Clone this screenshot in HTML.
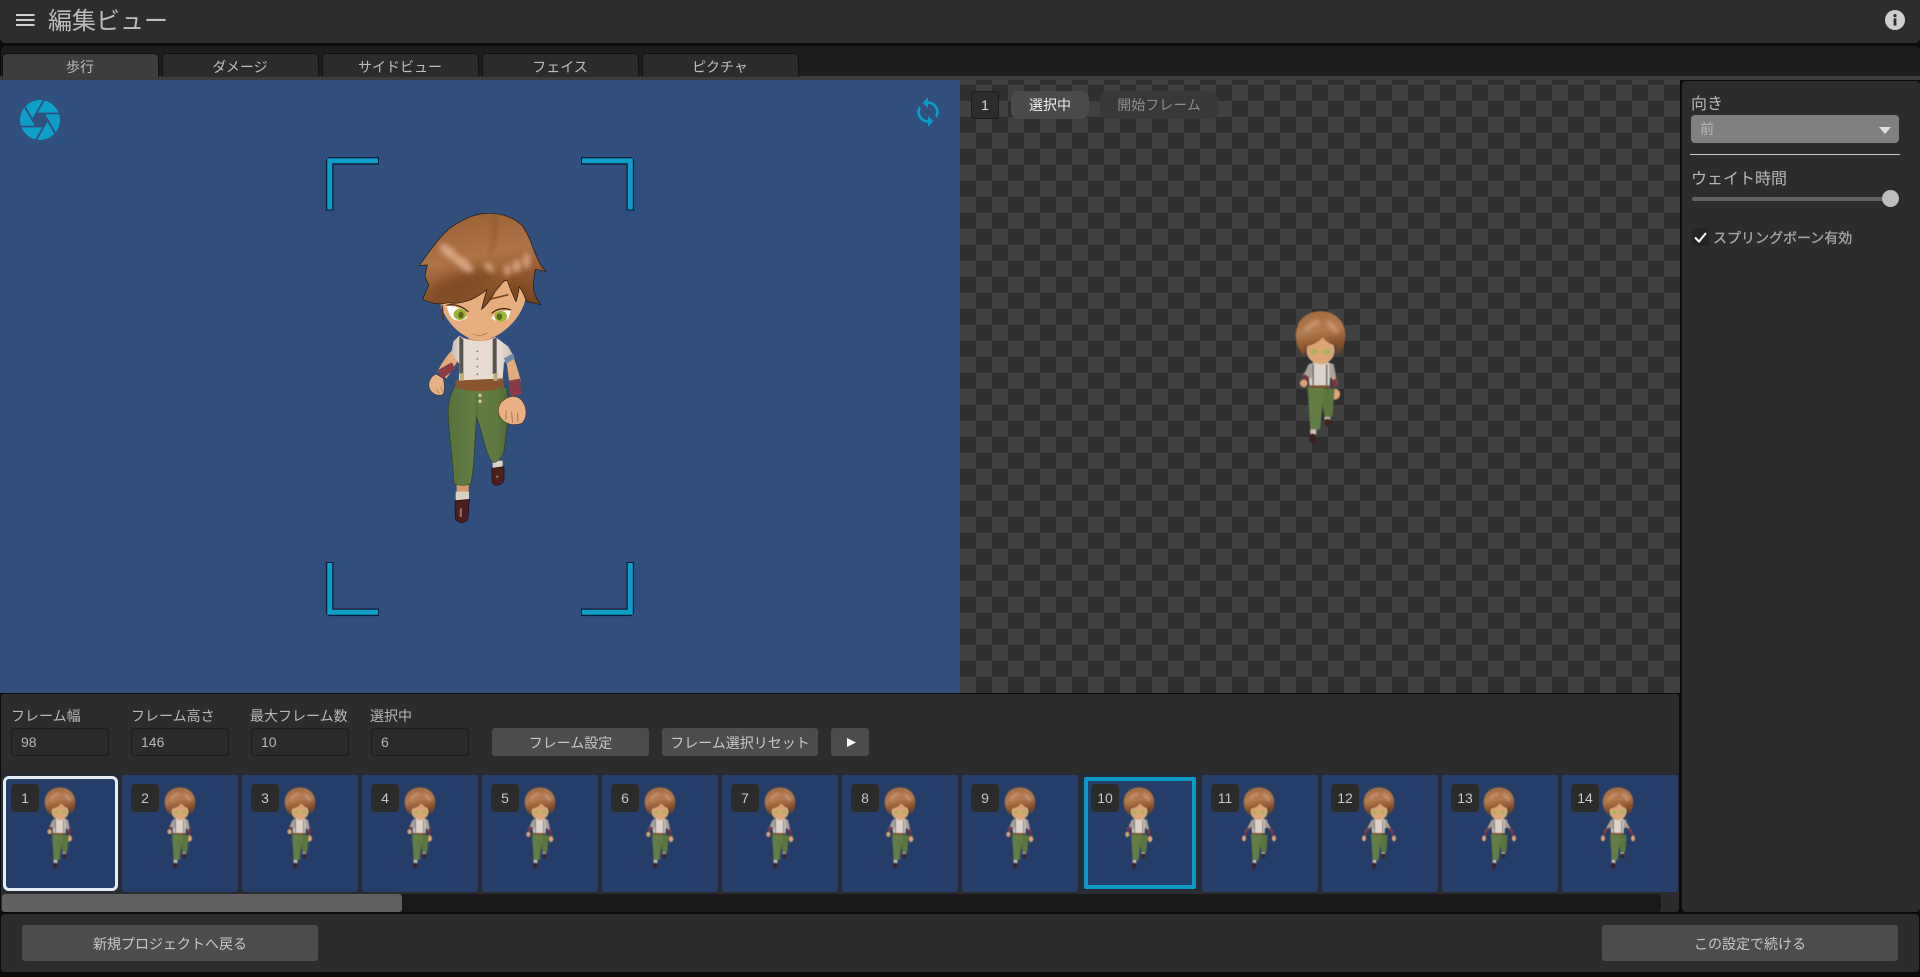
<!DOCTYPE html>
<html lang="ja"><head><meta charset="utf-8"><title>編集ビュー</title>
<style>
*{box-sizing:border-box}
html,body{margin:0;padding:0;width:1920px;height:977px;overflow:hidden;background:#0c0c0c}
body{position:relative;font-family:"Liberation Sans","Noto Sans CJK JP",sans-serif;color:#c4c4c4}
.a{position:absolute}
.tab{position:absolute;top:53px;width:157px;height:24px;background:#2b2b2b;border:1px solid #111;border-bottom:0;border-radius:5px 5px 0 0;text-align:center;font-size:14px;line-height:26px;color:#bdbdbd}
.lbl{position:absolute;top:706px;font-size:14px;line-height:20px;color:#b8b8b8;white-space:nowrap}
.inp{position:absolute;top:728px;width:98px;height:28px;background:#2a2a2a;border:1px solid #1c1c1c;border-radius:4px;font-size:14px;line-height:27px;padding-left:9px;color:#b8b8b8}
.btn{position:absolute;background:#4c4c4c;border-radius:3px;text-align:center;font-size:14px;color:#c8c8c8;white-space:nowrap}
.f{position:absolute;top:775px;width:116px;height:117px;background:#243e69;border-radius:3px}
.n{position:absolute;top:784px;width:28px;height:28px;background:#2b2b2b;border-radius:4px;text-align:center;font-size:14px;line-height:29px;color:#c8c8c8;z-index:3}
.t{position:absolute;top:770px;width:130px;height:130px;z-index:2;filter:blur(.45px)}
</style></head><body>
<svg width="0" height="0" style="position:absolute">
<defs>
<linearGradient id="hg" x1="0.3" y1="0" x2="0.55" y2="1"><stop offset="0" stop-color="#9a6136"/><stop offset=".45" stop-color="#ae7346"/><stop offset=".75" stop-color="#8e562e"/><stop offset="1" stop-color="#774622"/></linearGradient>
<linearGradient id="pg" x1="0" y1="0" x2="1" y2="0"><stop offset="0" stop-color="#567239"/><stop offset=".35" stop-color="#627d43"/><stop offset=".8" stop-color="#5f7a40"/><stop offset="1" stop-color="#4f6a35"/></linearGradient>
<linearGradient id="sg" x1="0" y1="0" x2="1" y2="0"><stop offset="0" stop-color="#c9bfb8"/><stop offset=".2" stop-color="#e6dad1"/><stop offset=".8" stop-color="#e6dad1"/><stop offset="1" stop-color="#c9bfb8"/></linearGradient>
<linearGradient id="tg" x1="0.3" y1="0" x2="0.5" y2="1"><stop offset="0" stop-color="#a56c42"/><stop offset=".45" stop-color="#b37a4e"/><stop offset=".8" stop-color="#84502a"/><stop offset="1" stop-color="#6d4020"/></linearGradient>
<filter id="b4" x="-30%" y="-30%" width="160%" height="160%"><feGaussianBlur stdDeviation="4"/></filter>
<filter id="b8" x="-40%" y="-40%" width="180%" height="180%"><feGaussianBlur stdDeviation="8"/></filter>
<filter id="b14" x="-30%" y="-30%" width="160%" height="160%"><feGaussianBlur stdDeviation="14"/></filter>
<clipPath id="hc"><path d="M118,226 C145,190 170,150 205,118 C240,92 280,72 320,70 C365,68 405,85 425,105 C445,130 455,165 470,200 C478,220 488,235 498,244 L466,238 C462,260 458,285 462,305 C468,325 475,335 482,344 L440,334 C435,320 428,305 418,290 C415,310 412,325 408,335 C398,315 390,295 382,272 C375,270 368,275 362,285 L345,305 C335,325 320,345 305,358 C308,340 315,320 320,300 C300,315 285,325 270,330 C250,338 225,342 205,338 L182,342 C160,342 145,335 128,328 C135,310 142,298 146,285 C142,275 137,268 135,258 C137,245 140,235 142,225 C135,225 125,226 118,226Z"/></clipPath>

<symbol id="body" viewBox="0 0 390 390">
<path d="M178,195 L206,195 L202,246 L188,250Z" fill="#5c773d"/>
<rect x="187" y="247" width="11" height="5" fill="#bdb3a5"/>
<ellipse cx="193" cy="258" rx="5" ry="7" fill="#42211f"/>
<path d="M156,192 L187,192 L179,270 L161,270Z" fill="#637e44"/>
<rect x="161" y="270" width="11" height="9" fill="#cfc5b6"/>
<ellipse cx="165" cy="287" rx="6" ry="9" fill="#3e1f1e"/>
<path d="M158,150 L172,146 L192,146 L204,150 L208,170 L197,175 L197,193 L160,193 L158,172 L150,168Z" fill="#ddd3ca"/>
<path d="M150,168 L158,150 L166,148 L164,178Z M208,170 L204,150 L196,148 L197,176Z" fill="#a9a29c"/>
<rect x="165" y="150" width="2.5" height="40" fill="#6a6660"/><rect x="190" y="150" width="2.5" height="40" fill="#6a6660"/>
<rect x="158" y="189" width="40" height="5" fill="#7d5434"/>
<ellipse cx="180" cy="124" rx="26" ry="26" fill="#dca575"/>
<ellipse cx="168" cy="127" rx="6.5" ry="5" fill="#a6b55a"/><ellipse cx="192" cy="127" rx="6.5" ry="5" fill="#a6b55a"/>
<path d="M135,105 C130,70 155,52 180,52 C206,52 230,72 225,105 C224,118 218,127 212,134 L207,115 C198,113 190,108 184,100 C176,110 164,114 154,117 L150,135 C141,125 136,115 135,105Z" fill="url(#tg)"/>
<path d="M152,88 C160,78 170,72 178,72 M192,72 C200,76 206,84 210,92" stroke="#cf9f7c" stroke-width="7" fill="none" filter="url(#b4)"/>
</symbol>
<symbol id="a1" viewBox="0 0 390 390">
<path d="M162,155 L151,172" stroke="#c9a084" stroke-width="8" fill="none"/><path d="M156,167 L150,178" stroke="#7d3440" stroke-width="9" fill="none"/>
<circle cx="149" cy="185" r="7" fill="#dca374"/>
<path d="M200,158 L208,188" stroke="#c9a084" stroke-width="8" fill="none"/><path d="M205,178 L208,192" stroke="#7d3440" stroke-width="8" fill="none"/>
<circle cx="206" cy="205" r="10" fill="#e0a676"/>
</symbol>
<symbol id="a2" viewBox="0 0 390 390">
<path d="M162,155 L148,178" stroke="#c9a084" stroke-width="7" fill="none"/><path d="M154,170 L147,184" stroke="#7d3440" stroke-width="8" fill="none"/>
<ellipse cx="145" cy="193" rx="6" ry="8" fill="#dca374"/>
<path d="M200,158 L210,188" stroke="#c9a084" stroke-width="7" fill="none"/><path d="M207,178 L211,196" stroke="#7d3440" stroke-width="7" fill="none"/>
<ellipse cx="213" cy="207" rx="7" ry="9" fill="#e0a676"/>
</symbol>
<symbol id="a3" viewBox="0 0 390 390">
<path d="M160,155 L140,188" stroke="#bf9a80" stroke-width="7" fill="none"/><path d="M148,175 L138,194" stroke="#7d3440" stroke-width="7" fill="none"/>
<ellipse cx="135" cy="205" rx="6" ry="9" fill="#dca374"/>
<path d="M200,155 L220,188" stroke="#bf9a80" stroke-width="7" fill="none"/><path d="M212,175 L222,194" stroke="#7d3440" stroke-width="7" fill="none"/>
<ellipse cx="225" cy="205" rx="6" ry="9" fill="#dca374"/>
</symbol>
</defs></svg>

<!-- header -->
<div class="a" style="left:0;top:0;width:1920px;height:43px;background:#2d2d2d;border-radius:0 0 5px 5px"></div>
<svg class="a" style="left:16px;top:13px" width="19" height="14"><path d="M0 2H18.5M0 7H18.5M0 12H18.5" stroke="#cfcfcf" stroke-width="2"/></svg>
<div class="a" style="left:48px;top:6px;font-size:24px;line-height:32px;color:#bcbcbc;white-space:nowrap">編集ビュー</div>
<svg class="a" style="left:1885px;top:10px" width="20" height="20"><circle cx="10" cy="10" r="10" fill="#cfcfcf"/><circle cx="10" cy="5.6" r="1.6" fill="#2d2d2d"/><rect x="8.6" y="8.4" width="2.8" height="7.2" fill="#2d2d2d"/></svg>

<!-- tab bar -->
<div class="a" style="left:1px;top:46px;width:1919px;height:30px;background:#1d1d1d;border-radius:5px 5px 0 0"></div>
<div class="a" style="left:0;top:76px;width:1920px;height:4px;background:#3c3c3c"></div>
<div class="tab" style="left:1.5px;background:#3d3d3d">歩行</div>
<div class="tab" style="left:161.5px">ダメージ</div>
<div class="tab" style="left:321.5px">サイドビュー</div>
<div class="tab" style="left:481.5px">フェイス</div>
<div class="tab" style="left:641.5px">ピクチャ</div>

<!-- blue view -->
<div class="a" style="left:0;top:80px;width:960px;height:613px;background:#304f7d"></div>
<svg class="a" style="left:20px;top:100px" width="40" height="40" viewBox="-20 -20 40 40">
<circle r="20" fill="#0d9fc8"/>
<polygon points="7.5,0 3.75,6.5 -3.75,6.5 -7.5,0 -3.75,-6.5 3.75,-6.5" fill="#304f7d"/>
<g stroke="#304f7d" stroke-width="1.8">
<line x1="-3.75" y1="-6.5" x2="21" y2="-6.5"/>
<line x1="-3.75" y1="-6.5" x2="21" y2="-6.5" transform="rotate(60)"/>
<line x1="-3.75" y1="-6.5" x2="21" y2="-6.5" transform="rotate(120)"/>
<line x1="-3.75" y1="-6.5" x2="21" y2="-6.5" transform="rotate(180)"/>
<line x1="-3.75" y1="-6.5" x2="21" y2="-6.5" transform="rotate(240)"/>
<line x1="-3.75" y1="-6.5" x2="21" y2="-6.5" transform="rotate(300)"/>
</g></svg>
<svg class="a" style="left:912px;top:96px" width="32" height="32" viewBox="0 0 24 24"><path fill="#0a9cc5" d="M12 4V1L8 5l4 4V6c3.31 0 6 2.69 6 6 0 1.01-.25 1.97-.7 2.8l1.46 1.46C19.54 15.03 20 13.57 20 12c0-4.42-3.58-8-8-8zm0 14c-3.31 0-6-2.69-6-6 0-1.01.25-1.97.7-2.8L5.24 7.74C4.46 8.97 4 10.43 4 12c0 4.42 3.58 8 8 8v3l4-4-4-4v3z"/></svg>
<svg class="a" style="left:320px;top:150px" width="320" height="475" viewBox="320 150 320 475" fill="none">
<g stroke="#0c1c34" stroke-width="7.6" stroke-linecap="butt" stroke-linejoin="round"><path d="M379 160.8H329.7V210.5M581 160.8H630.3V210.5M329.7 562V612.3H379M630.3 562V612.3H581"/></g>
<g stroke="#0d9fc8" stroke-width="5" stroke-linecap="butt" stroke-linejoin="miter"><path d="M378 160.8H329.7V209.5M582 160.8H630.3V209.5M329.7 563V612.3H378M630.3 563V612.3H582"/></g>
</svg>

<!-- big character -->
<svg class="a" style="left:380px;top:190px;filter:blur(.35px)" width="200" height="350" viewBox="0 0 600 1050">
<!-- back leg -->
<rect x="338" y="812" width="30" height="24" fill="#d8d0c4"/>
<path d="M335,835 L372,830 L372,870 C370,885 345,892 337,878Z" fill="#4c1f1d" stroke="#1d0d0c" stroke-width="2"/>
<circle cx="352" cy="860" r="4" fill="#8a6a48"/>
<!-- front leg lower -->
<rect x="230" y="882" width="36" height="26" fill="#d49a6c"/>
<rect x="227" y="905" width="40" height="27" fill="#d9d1c6"/>
<path d="M225,932 L268,928 L264,985 C258,1002 232,1002 226,985Z" fill="#4c1d1c" stroke="#1d0d0c" stroke-width="2"/>
<rect x="239" y="955" width="7" height="26" fill="#91714c"/>
<!-- left arm -->
<path d="M222,475 C200,495 185,520 172,545 L200,565 C215,540 235,515 242,492Z" fill="#e3ab7c"/>
<path d="M172,541 L215,517 L226,535 L186,568Z" fill="#8c3b46"/>
<path d="M168,552 C150,560 143,580 148,595 C155,612 178,622 190,612 C196,596 192,575 190,565Z" fill="#e8b083" stroke="#2a1a10" stroke-width="1.5"/>
<path d="M170,596 L178,612 M182,590 L188,605" stroke="#a56f48" stroke-width="2"/>
<!-- right arm -->
<path d="M378,500 L402,505 C412,535 420,560 422,575 L388,580Z" fill="#e3ab7c"/>
<path d="M386,572 L420,566 L424,612 L392,620Z" fill="#8c3b46"/>
<!-- pants -->
<path d="M224,590 L378,590 C392,640 382,700 375,760 C372,790 368,808 342,818 C322,812 312,745 290,680 C282,760 284,830 272,882 C252,888 236,886 222,882 C218,800 202,700 205,650 C208,620 216,605 224,590Z" fill="url(#pg)" stroke="#25331a" stroke-width="1.5"/>
<path d="M290,612 L292,680" stroke="#4e6835" stroke-width="3"/>
<circle cx="300" cy="616" r="5" fill="#d8c68a"/><circle cx="300" cy="634" r="5" fill="#d8c68a"/>
<!-- hand right -->
<path d="M372,630 C355,640 350,665 360,680 C372,700 395,710 425,700 C442,685 442,655 428,635 C415,615 390,615 372,630Z" fill="#e8b083" stroke="#2a1a10" stroke-width="1.5"/>
<path d="M378,662 L378,690 M395,665 L397,698 M412,668 L414,695" stroke="#8e5d3c" stroke-width="2"/>
<!-- neck + shirt -->
<rect x="265" y="430" width="70" height="35" fill="#c98d5f"/>
<path d="M238,437 C262,455 325,460 345,440 L385,470 L400,497 L372,517 L366,590 L236,590 L238,522 L214,490 L220,455Z" fill="url(#sg)"/>
<path d="M372,505 L400,490 L404,505 L378,522Z" fill="#6f8ba4"/>
<path d="M238,438 L238,550 L250,552 L250,448Z" fill="#55544f"/>
<path d="M338,448 L338,552 L350,552 L350,440Z" fill="#55544f"/>
<g fill="#a8505e"><circle cx="292" cy="484" r="2.5"/><circle cx="292" cy="507" r="2.5"/><circle cx="292" cy="530" r="2.5"/><circle cx="292" cy="553" r="2.5"/><circle cx="292" cy="576" r="2.5"/></g>
<path d="M226,572 L370,565 L372,590 C340,606 270,608 226,592Z" fill="#8b5430"/>
<rect x="240" y="550" width="12" height="22" fill="#c2ad78"/><rect x="341" y="550" width="12" height="22" fill="#c2ad78"/>
<!-- face -->
<path d="M178,330 C190,395 250,450 300,452 C352,450 420,395 436,330 L400,220 L210,220Z" fill="#e6ad7e"/>
<path d="M186,345 C192,370 184,385 192,392" stroke="#5e3218" stroke-width="4" fill="none"/>
<!-- eyes -->
<path d="M200,348 C225,345 250,358 262,382 C250,394 225,395 214,382 C207,372 203,360 200,348Z" fill="#fff"/>
<ellipse cx="240" cy="373" rx="19" ry="17" fill="#a0b23a"/><ellipse cx="243" cy="375" rx="8" ry="10" fill="#56691c"/>
<path d="M392,362 C365,360 345,368 334,384 C345,396 372,397 384,385 C388,378 391,370 392,362Z" fill="#fff"/>
<ellipse cx="362" cy="379" rx="19" ry="16" fill="#a0b23a"/><ellipse cx="358" cy="380" rx="8" ry="10" fill="#56691c"/>
<path d="M200,346 C225,340 250,350 265,366 M393,360 C372,352 350,356 335,370" stroke="#33200f" stroke-width="3.5" fill="none"/>
<path d="M320,330 L385,314 M235,333 L275,322" stroke="#7a4522" stroke-width="5" fill="none"/>
<path d="M278,432 C292,438 310,438 322,428" stroke="#a5693c" stroke-width="2" fill="none"/>
<!-- hair -->
<path d="M118,226 C145,190 170,150 205,118 C240,92 280,72 320,70 C365,68 405,85 425,105 C445,130 455,165 470,200 C478,220 488,235 498,244 L466,238 C462,260 458,285 462,305 C468,325 475,335 482,344 L440,334 C435,320 428,305 418,290 C415,310 412,325 408,335 C398,315 390,295 382,272 C375,270 368,275 362,285 L345,305 C335,325 320,345 305,358 C308,340 315,320 320,300 C300,315 285,325 270,330 C250,338 225,342 205,338 L182,342 C160,342 145,335 128,328 C135,310 142,298 146,285 C142,275 137,268 135,258 C137,245 140,235 142,225 C135,225 125,226 118,226Z" fill="url(#hg)" stroke="#20140c" stroke-width="2"/>
<g clip-path="url(#hc)">
<path d="M150,300 C210,255 290,210 345,250 C330,285 250,320 170,330Z M380,260 L420,280 L440,330 L400,320Z" fill="#6e3f1e" filter="url(#b14)" opacity=".5"/>
<path d="M350,75 C352,110 345,150 330,190" stroke="#85512a" stroke-width="10" fill="none" filter="url(#b8)" opacity=".6"/>
<g filter="url(#b8)" fill="#dcaa8a" opacity=".9">
<ellipse cx="205" cy="185" rx="32" ry="15" transform="rotate(40 205 185)"/>
<ellipse cx="250" cy="222" rx="36" ry="15" transform="rotate(40 250 222)"/>
<ellipse cx="328" cy="232" rx="18" ry="10" transform="rotate(45 328 232)"/>
<ellipse cx="382" cy="240" rx="10" ry="18"/>
<ellipse cx="410" cy="228" rx="12" ry="20"/>
<ellipse cx="440" cy="212" rx="10" ry="24"/>
</g>
</g>
</svg>

<!-- checker view -->
<div class="a" style="left:960px;top:80px;width:720px;height:613px;background:conic-gradient(#404040 25%,#2f2f2f 0 50%,#404040 0 75%,#2f2f2f 0);background-size:32px 32px;background-position:16px 21px"></div>
<div class="a" style="left:971px;top:91px;width:28px;height:28px;background:#2c2c2c;border:1px solid #1c1c1c;border-radius:4px;text-align:center;font-size:14px;line-height:26px;color:#ddd">1</div>
<div class="a" style="left:1011px;top:91px;width:78px;height:28px;background:#4b4b4b;border-radius:8px;text-align:center;font-size:14px;line-height:28px;color:#efefef">選択中</div>
<div class="a" style="left:1100px;top:91px;width:118px;height:28px;background:#383838;border-radius:8px;text-align:center;font-size:14px;line-height:28px;color:#8c8c8c">開始フレーム</div>
<svg class="a" style="left:1223px;top:282.5px;filter:blur(.5px)" width="211.4" height="211.4"><use href="#a1"/><use href="#body"/></svg>

<!-- right panel -->
<div class="a" style="left:1680px;top:80px;width:240px;height:833px;background:#0c0c0c"></div>
<div class="a" style="left:1682px;top:81px;width:238px;height:831px;background:#2c2c2c;border-radius:4px"></div>
<div class="a" style="left:1691px;top:93.5px;font-size:16px;line-height:22px;color:#b8b8b8">向き</div>
<div class="a" style="left:1691px;top:115px;width:208px;height:28px;background:#808080;border-radius:4px;font-size:14px;line-height:29px;padding-left:9px;color:#b4b4b4">前</div>
<svg class="a" style="left:1879px;top:127px" width="12" height="7"><polygon points="0,0 12,0 6,7" fill="#e0e0e0"/></svg>
<div class="a" style="left:1690px;top:154px;width:210px;height:1px;background:#c8c8c8"></div>
<div class="a" style="left:1691px;top:168.5px;font-size:16px;line-height:22px;color:#b8b8b8">ウェイト時間</div>
<div class="a" style="left:1692px;top:197px;width:198px;height:4px;background:#626262;border-radius:2px"></div>
<div class="a" style="left:1881.5px;top:190px;width:17px;height:17px;background:#bdbdbd;border-radius:50%"></div>
<div class="a" style="left:1692px;top:228px;width:17px;height:18px;background:#242424;border-radius:3px"></div>
<svg class="a" style="left:1694px;top:231px" width="13" height="12"><path d="M1 6.5L5 10.5L12 2" stroke="#fff" stroke-width="2" fill="none"/></svg>
<div class="a" style="left:1713px;top:228px;font-size:14px;line-height:20px;-webkit-text-stroke:.35px #a4a4a4;color:#a4a4a4;white-space:nowrap">スプリングボーン有効</div>

<!-- control panel -->
<div class="a" style="left:0;top:693px;width:1682px;height:1px;background:#0c0c0c"></div>
<div class="a" style="left:1px;top:694px;width:1678px;height:218px;background:#2c2c2c;border-radius:3px"></div>
<div class="lbl" style="left:11px">フレーム幅</div>
<div class="lbl" style="left:131px">フレーム高さ</div>
<div class="lbl" style="left:250px">最大フレーム数</div>
<div class="lbl" style="left:370px">選択中</div>
<div class="inp" style="left:11px">98</div>
<div class="inp" style="left:131px">146</div>
<div class="inp" style="left:251px">10</div>
<div class="inp" style="left:371px">6</div>
<div class="btn" style="left:492px;top:728px;width:157px;height:28px;line-height:30px">フレーム設定</div>
<div class="btn" style="left:662px;top:728px;width:156px;height:28px;line-height:30px">フレーム選択リセット</div>
<div class="btn" style="left:831px;top:728px;width:38px;height:28px"></div>
<svg class="a" style="left:847px;top:738px" width="9" height="9"><polygon points="0,0 9,4.5 0,9" fill="#fff"/></svg>

<!-- frames -->
<div class="a" style="left:1px;top:773px;width:1678px;height:120px;background:#262b36"></div>
<div class="f" style="left:2.5px;top:775.5px;width:115px;height:115px;border:3px solid #e4ecf4;border-radius:6px"></div>
<div class="f" style="left:122px"></div><div class="f" style="left:242px"></div><div class="f" style="left:362px"></div>
<div class="f" style="left:482px"></div><div class="f" style="left:602px"></div><div class="f" style="left:722px"></div>
<div class="f" style="left:842px"></div><div class="f" style="left:962px"></div>
<div class="f" style="left:1084px;top:777px;width:112px;height:112px;border:4px solid #0a9ac4;border-radius:2px"></div>
<div class="f" style="left:1202px"></div><div class="f" style="left:1322px"></div><div class="f" style="left:1442px"></div><div class="f" style="left:1562px"></div>
<div class="n" style="left:11px">1</div><div class="n" style="left:131px">2</div><div class="n" style="left:251px">3</div><div class="n" style="left:371px">4</div>
<div class="n" style="left:491px">5</div><div class="n" style="left:611px">6</div><div class="n" style="left:731px">7</div><div class="n" style="left:851px">8</div>
<div class="n" style="left:971px">9</div><div class="n" style="left:1091px">10</div><div class="n" style="left:1211px">11</div><div class="n" style="left:1331px">12</div>
<div class="n" style="left:1451px">13</div><div class="n" style="left:1571px">14</div>
<svg class="t" style="left:0"><use href="#a1"/><use href="#body"/></svg>
<svg class="t" style="left:120px"><use href="#a1"/><use href="#body"/></svg>
<svg class="t" style="left:240px"><use href="#a1"/><use href="#body"/></svg>
<svg class="t" style="left:360px"><use href="#a1"/><use href="#body"/></svg>
<svg class="t" style="left:480px"><use href="#a2"/><use href="#body"/></svg>
<svg class="t" style="left:600px"><use href="#a2"/><use href="#body"/></svg>
<svg class="t" style="left:720px"><use href="#a2"/><use href="#body"/></svg>
<svg class="t" style="left:840px"><use href="#a2"/><use href="#body"/></svg>
<svg class="t" style="left:960px"><use href="#a2"/><use href="#body"/></svg>
<svg class="t" style="left:1079px"><use href="#a2"/><use href="#body"/></svg>
<svg class="t" style="left:1199px"><use href="#a3"/><use href="#body"/></svg>
<svg class="t" style="left:1319px"><use href="#a3"/><use href="#body"/></svg>
<svg class="t" style="left:1439px"><use href="#a3"/><use href="#body"/></svg>
<svg class="t" style="left:1558px"><use href="#a3"/><use href="#body"/></svg>

<!-- scrollbar -->
<div class="a" style="left:2px;top:894px;width:1659px;height:18px;background:#191919;border-radius:3px"></div>
<div class="a" style="left:2px;top:894px;width:400px;height:18px;background:#606060;border-radius:3px"></div>

<!-- bottom bar -->
<div class="a" style="left:1px;top:914px;width:1918px;height:58px;background:#2c2c2c;border-radius:4px"></div>
<div class="btn" style="left:22px;top:925px;width:296px;height:36px;line-height:39px">新規プロジェクトへ戻る</div>
<div class="btn" style="left:1602px;top:925px;width:296px;height:36px;line-height:39px">この設定で続ける</div>
</body></html>
